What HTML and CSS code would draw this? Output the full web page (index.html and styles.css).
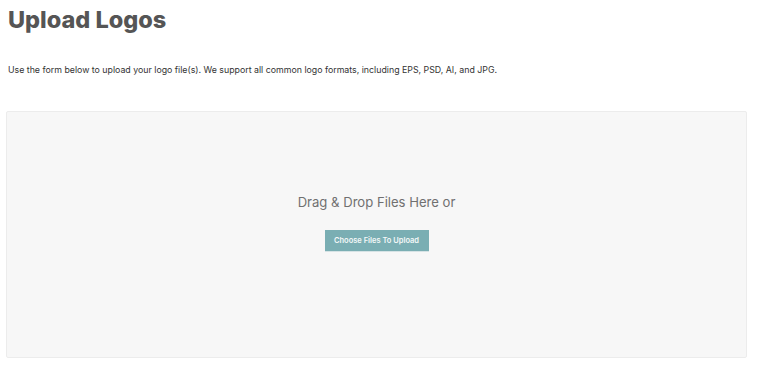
FILE: index.html
```html
<!doctype html>
<html lang="en">
<head>
    <meta charset="UTF-8">
    <title>Upload Logos</title>
    <link rel="stylesheet" href="styles.css">
</head>
<body>

<div class="page">
    <h1 class="title">Upload Logos</h1>
    <p class="intro">Use the form below to upload your logo file(s). We support all common logo formats, including EPS, PSD, AI, and JPG.</p>

    <div class="dropzone">
        <p class="drop-text">Drag &amp; Drop Files Here or</p>
        <a href="#" class="btn-upload">Choose Files To Upload</a>
    </div>
</div>

</body>
</html>
```

FILE: styles.css
```css
* {
    margin: 0;
    padding: 0;
    box-sizing: border-box;
}
body {
    background: #fff;
    font-family: Inter, "Liberation Sans", sans-serif;
    color: #333;
}
a {
    text-decoration: none;
}
.page {
    padding: 6px 13px 0 6px;
}
.title {
    font-size: 23.5px;
    font-weight: 800;
    color: #555;
    line-height: 28px;
    padding-left: 2px;
}
.intro {
    margin-top: 29px;
    padding-left: 2px;
    font-size: 8.8px;
    line-height: 14px;
    color: #333;
}
.dropzone {
    margin-top: 34px;
    height: 247px;
    background: #f7f7f7;
    border: 1px solid #ececec;
    border-radius: 2px;
    display: flex;
    flex-direction: column;
    align-items: center;
    justify-content: center;
    padding-bottom: 24px;
}
.drop-text {
    font-size: 13.1px;
    color: #707070;
    line-height: 18px;
}
.btn-upload {
    margin-top: 19px;
    display: block;
    width: 104px;
    height: 22px;
    line-height: 21px;
    text-align: center;
    background: #7aaeb3;
    border-bottom: 1px solid #d6e3e5;
    color: #f4f8f8;
    font-size: 7.5px;
    font-weight: 600;
}
```
